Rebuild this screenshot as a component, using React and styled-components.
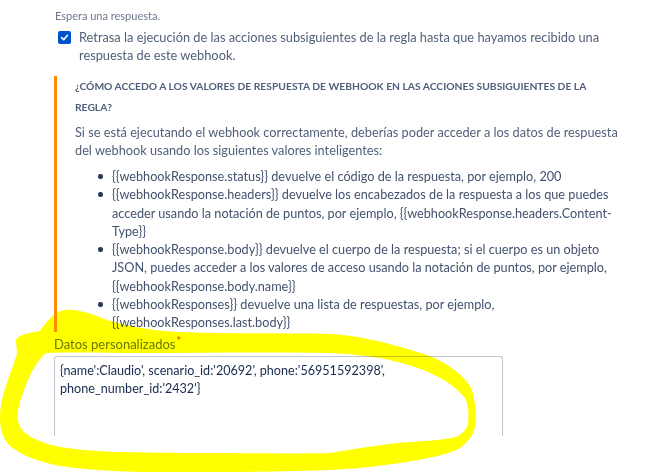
import React from "react";
import styled, { createGlobalStyle } from "styled-components";

const GlobalStyle = createGlobalStyle`
  html, body { margin: 0; padding: 0; background: #ffffff; }
  body { font-family: Lato, "Noto Sans", sans-serif; }
`;

const Page = styled.div`
  position: relative;
  isolation: isolate;
  width: 667px;
  height: 472px;
  overflow: hidden;
  box-sizing: border-box;
  padding: 9px 0 0 54px;
  background: #ffffff;
`;

const Column = styled.div`
  width: 580px;
  display: flex;
  flex-direction: column;
  align-items: flex-start;
`;

const Hint = styled.div`
  padding-left: 1px;
  font-size: 11px;
  line-height: 14px;
  color: #6b778c;
`;

const CheckRow = styled.label`
  display: flex;
  align-items: flex-start;
  margin-top: 5px;
  padding-left: 4px;
  font-size: 12.8px;
  line-height: 18.3px;
  color: #505f79;
`;

const Box = styled.span`
  flex-shrink: 0;
  width: 13px;
  height: 13px;
  margin-top: 3px;
  border-radius: 2px;
  background: #0052cc;
  display: flex;
  align-items: center;
  justify-content: center;
`;

const CheckText = styled.span`
  margin-left: 8px;
`;

const Panel = styled.section`
  margin-top: 11px;
  width: 576px;
  box-sizing: border-box;
  border-left: 3px solid #ff8b00;
  padding: 0 0 0 18px;
`;

const Title = styled.h4`
  margin: 0;
  max-width: 525px;
  font-size: 10.3px;
  font-weight: 700;
  line-height: 21.7px;
  text-transform: uppercase;
  color: #505f79;
`;

const Para = styled.p`
  margin: 4px 0 0;
  font-size: 12.75px;
  line-height: 18px;
  color: #505f79;
`;

const List = styled.ul`
  margin: 8px 0 0;
  padding: 0 0 0 37px;
  list-style: none;
`;

const Item = styled.li`
  position: relative;
  font-size: 12.7px;
  line-height: 18.3px;
  color: #42526e;
  &::before {
    content: "";
    position: absolute;
    left: -14px;
    top: 7px;
    width: 4.5px;
    height: 4.5px;
    border-radius: 50%;
    background: #253858;
  }
`;

const FieldLabel = styled.div`
  margin-top: 3px;
  font-size: 13px;
  line-height: 18px;
  color: #6b778c;
`;

const Required = styled.span`
  color: #de350b;
  font-size: 11px;
  vertical-align: top;
  line-height: 12px;
  padding-left: 1px;
`;

const Area = styled.textarea`
  margin: 3px 0 0;
  width: 449px;
  height: 80px;
  box-sizing: border-box;
  border: 1px solid #c1c7d0;
  border-bottom: none;
  border-radius: 3px 3px 0 0;
  padding: 5px 5px;
  font-family: inherit;
  font-size: 12.6px;
  line-height: 18.3px;
  color: #172b4d;
  background: #ffffff;
  resize: none;
  outline: none;
  overflow: hidden;
`;

const Highlight = styled.svg`
  position: absolute;
  left: 0;
  top: 0;
  pointer-events: none;
  mix-blend-mode: multiply;
`;

const outer =
  "M16 340 C18 335 28 333 40 331 C46 322 54 312 64 310 C78 309 92 314 104 319 C122 325 146 330 176 332 C230 334 290 333 330 334 C352 335 368 339 382 342 C404 348 420 352 432 357 C448 364 462 374 470 386 C476 398 476 414 475 426 C474 434 468 442 460 448 C450 454 430 458 400 463 C370 467 352 469 330 470 C280 472 220 472 160 472 C120 472 90 470 60 466 C40 462 22 456 10 446 C2 438 0 428 0 418 C0 404 4 390 9 377 C12 368 15 360 17 354 C17 350 16 345 16 340 Z";
const inner =
  "M46 353 C80 352 110 353 140 353 C200 353 260 352 330 353 C352 354 366 356 380 358 C400 362 418 367 430 373 C446 380 458 389 465 398 C469 406 469 416 468 424 C466 430 462 434 456 437 C444 440 424 441 397 443 C370 446 350 450 330 453 C290 454 240 453 200 453 C160 453 130 452 113 452 C92 451 74 449 60 447 C46 444 32 439 24 432 C18 426 17 418 18 410 C20 400 24 390 28 380 C32 370 38 360 46 353 Z";

const items = [
  "{{webhookResponse.status}} devuelve el código de la respuesta, por ejemplo, 200",
  "{{webhookResponse.headers}} devuelve los encabezados de la respuesta a los que puedes acceder usando la notación de puntos, por ejemplo, {{webhookResponse.headers.Content-Type}}",
  "{{webhookResponse.body}} devuelve el cuerpo de la respuesta; si el cuerpo es un objeto JSON, puedes acceder a los valores de acceso usando la notación de puntos, por ejemplo, {{webhookResponse.body.name}}",
  "{{webhookResponses}} devuelve una lista de respuestas, por ejemplo, {{webhookResponses.last.body}}",
];

export default function App() {
  return (
    <>
      <GlobalStyle />
      <Page>
        <Column>
          <Hint>Espera una respuesta.</Hint>
          <CheckRow>
            <Box>
              <svg width="9" height="9" viewBox="0 0 10 10">
                <path
                  d="M1.8 5.2 L4.1 7.4 L8.3 2.6"
                  fill="none"
                  stroke="#ffffff"
                  strokeWidth="1.8"
                  strokeLinecap="round"
                  strokeLinejoin="round"
                />
              </svg>
            </Box>
            <CheckText>
              Retrasa la ejecución de las acciones subsiguientes de la regla hasta que hayamos recibido una respuesta de este webhook.
            </CheckText>
          </CheckRow>
          <Panel>
            <Title>
              ¿Cómo accedo a los valores de respuesta de webhook en las acciones subsiguientes de la regla?
            </Title>
            <Para>
              Si se está ejecutando el webhook correctamente, deberías poder acceder a los datos de respuesta del webhook usando los siguientes valores inteligentes:
            </Para>
            <List>
              {items.map((t) => (
                <Item key={t}>{t}</Item>
              ))}
            </List>
          </Panel>
          <FieldLabel>
            Datos personalizados<Required>*</Required>
          </FieldLabel>
          <Area
            readOnly
            value={"{name':Claudio', scenario_id:'20692', phone:'56951592398', phone_number_id:'2432'}"}
          />
        </Column>
        <Highlight width="667" height="472" viewBox="0 0 667 472">
          <path d={outer + " " + inner} fill="#ffff00" fillRule="evenodd" />
        </Highlight>
      </Page>
    </>
  );
}
